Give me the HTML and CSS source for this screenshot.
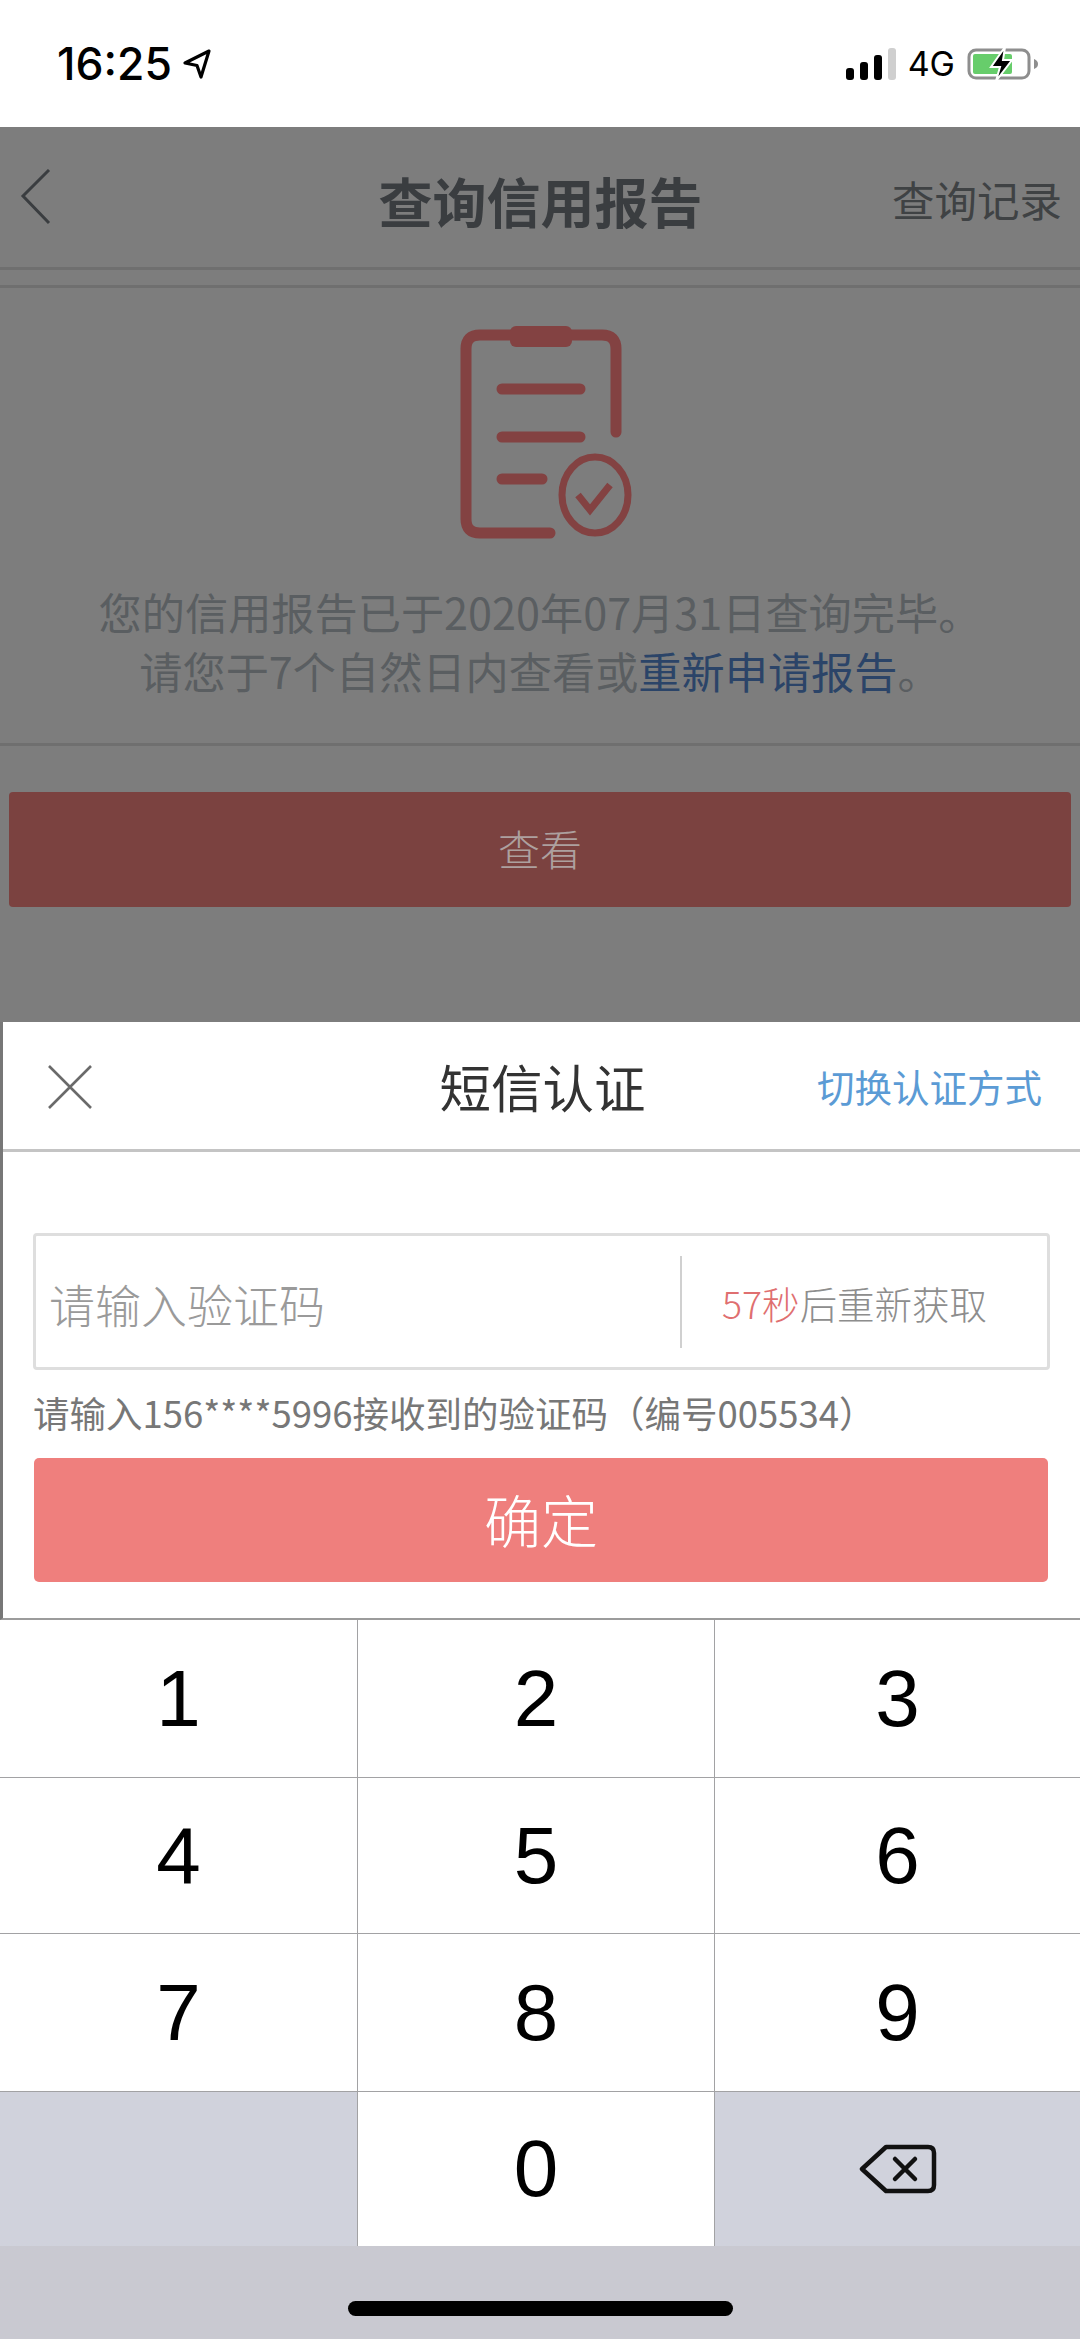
FILE: index.html
```html
<!DOCTYPE html>
<html lang="zh-CN">
<head>
  <meta charset="UTF-8">
  <meta name="viewport" content="width=device-width, initial-scale=1.0">
  <title>查询信用报告</title>
  <link rel="stylesheet" href="styles.css">
</head>
<body>
  <div class="phone">

    <!-- Status bar -->
    <div class="status-bar">
      <div class="status-left">
        <span class="clock">16:25</span>
        <svg class="locate" width="30" height="32" viewBox="0 0 30 32">
          <path d="M27 3 L3 15 L15 17.5 L19 29 Z" fill="none" stroke="#000" stroke-width="3.2" stroke-linejoin="round"/>
        </svg>
      </div>
      <div class="status-right">
        <div class="signal">
          <span class="bar bar1"></span>
          <span class="bar bar2"></span>
          <span class="bar bar3"></span>
          <span class="bar bar4"></span>
        </div>
        <span class="network">4G</span>
        <svg class="battery" width="72" height="34" viewBox="0 0 72 34">
          <rect x="2" y="3" width="60" height="28" rx="7" fill="none" stroke="#8e8e8e" stroke-width="3"/>
          <rect x="6" y="7" width="39" height="20" rx="2" fill="#67cd6b"/>
          <path d="M67 12 C70 13 71 15 71 17 C71 19 70 21 67 22 Z" fill="#8e8e8e"/>
          <path d="M38 0 L24 20 L33 20 L29 34 L45 13 L36 13 Z" fill="#000" stroke="#fff" stroke-width="2"/>
        </svg>
      </div>
    </div>

    <!-- Report page, dimmed behind the sheet -->
    <div class="report-page">
      <div class="nav">
        <svg class="back" width="34" height="56" viewBox="0 0 34 56">
          <path d="M30 1 L4 27 L30 54" fill="none" stroke="#3a3d40" stroke-width="3"/>
        </svg>
        <h1 class="nav-title">查询信用报告</h1>
        <span class="nav-link">查询记录</span>
      </div>

      <div class="report-card">
        <svg class="report-icon" width="180" height="230" viewBox="0 0 180 230">
          <g fill="none" stroke="#834242" stroke-width="11" stroke-linecap="round">
            <path d="M92 207 H22 Q8 207 8 193 V23 Q8 9 22 9 H144 Q158 9 158 23 V106"/>
            <path d="M44 63 H122"/>
            <path d="M44 111 H122"/>
            <path d="M44 153 H84"/>
          </g>
          <rect x="52" y="0" width="62" height="21" rx="6" fill="#834242"/>
          <ellipse cx="137" cy="169" rx="33" ry="38" fill="none" stroke="#834242" stroke-width="7"/>
          <path d="M120 169 L132 184 L152 159" fill="none" stroke="#834242" stroke-width="7"/>
        </svg>
        <p class="report-text">您的信用报告已于2020年07月31日查询完毕。</p>
        <p class="report-text">请您于7个自然日内查看或<span class="report-link">重新申请报告</span>。</p>
      </div>

      <div class="view-btn">查看</div>
    </div>

    <!-- SMS verification sheet -->
    <div class="sheet">
      <div class="sheet-head">
        <svg class="close" width="46" height="46" viewBox="0 0 46 46">
          <path d="M2 2 L44 44 M44 2 L2 44" fill="none" stroke="#6a6a6a" stroke-width="2.6"/>
        </svg>
        <h2 class="sheet-title">短信认证</h2>
        <span class="sheet-switch">切换认证方式</span>
      </div>
      <div class="sheet-body">
        <div class="code-box">
          <span class="code-input">请输入验证码</span>
          <span class="code-timer"><span class="code-secs">57秒</span>后重新获取</span>
        </div>
        <p class="hint">请输入156****5996接收到的验证码（编号005534）</p>
        <div class="confirm-btn">确定</div>
      </div>
    </div>

    <!-- Number pad -->
    <div class="keypad">
      <div class="key">1</div>
      <div class="key">2</div>
      <div class="key">3</div>
      <div class="key">4</div>
      <div class="key">5</div>
      <div class="key">6</div>
      <div class="key">7</div>
      <div class="key">8</div>
      <div class="key">9</div>
      <div class="key key-gray"></div>
      <div class="key">0</div>
      <div class="key key-gray">
        <svg width="78" height="50" viewBox="0 0 78 50">
          <path d="M27 3 H69 Q75 3 75 9 V41 Q75 47 69 47 H27 L3 25 Z" fill="none" stroke="#111" stroke-width="4.5" stroke-linejoin="round"/>
          <path d="M36 15 L56 35 M56 15 L36 35" fill="none" stroke="#111" stroke-width="4.5" stroke-linecap="round"/>
        </svg>
      </div>
    </div>

    <div class="home-area">
      <span class="home-bar"></span>
    </div>
  </div>
</body>
</html>
```

FILE: styles.css
```css
/* Universal Styles */
body {
  margin: 0;
  padding: 0;
  background: #fff;
  font-family: 'Noto Sans CJK SC', 'Noto Sans', sans-serif;
}

h1, h2, p {
  margin: 0;
  font-weight: 400;
}

.phone {
  width: 1080px;
  height: 2339px;
  display: flex;
  flex-direction: column;
  overflow: hidden;
}

/* Status Bar */
.status-bar {
  height: 127px;
  flex: none;
  box-sizing: border-box;
  padding: 0 41px 0 57px;
  display: flex;
  justify-content: space-between;
  align-items: center;
  background: #fff;
  color: #000;
}

.status-left, .status-right {
  display: flex;
  align-items: center;
}

.clock {
  font-family: 'Inter', sans-serif;
  font-size: 44.5px;
  font-weight: 500;
}

.locate {
  margin-left: 10px;
}

.signal {
  display: flex;
  align-items: flex-end;
  gap: 6px;
  height: 32px;
}

.bar {
  width: 8px;
  background: #000;
  border-radius: 3px;
}

.bar1 { height: 12px; }
.bar2 { height: 18px; }
.bar3 { height: 25px; }
.bar4 { height: 32px; background: #cfcfcf; }

.network {
  margin-left: 12px;
  font-family: 'Inter', sans-serif;
  font-size: 34px;
}

.battery {
  margin-left: 12px;
}

/* Dimmed Report Page */
.report-page {
  height: 895px;
  flex: none;
  background: #7d7d7d;
  color: #5a5e61;
}

.nav {
  height: 143px;
  box-sizing: border-box;
  padding: 0 18px 0 19px;
  display: grid;
  grid-template-columns: 1fr auto 1fr;
  align-items: center;
  border-bottom: 3px solid #6f6f6f;
}

.nav-title {
  font-size: 54px;
  font-weight: 700;
  color: #3a3d40;
  margin-top: 7px;
}

.nav-link {
  justify-self: end;
  font-size: 42.5px;
  color: #3f4244;
  margin-top: 2px;
}

.report-card {
  margin-top: 15px;
  height: 461px;
  box-sizing: border-box;
  padding-top: 38px;
  border-top: 3px solid #6f6f6f;
  border-bottom: 3px solid #6f6f6f;
  display: flex;
  flex-direction: column;
  align-items: center;
  text-align: center;
}

.report-icon {
  margin: 0 0 26px 16px;
}

.report-text {
  font-size: 43.2px;
  line-height: 59px;
  font-weight: 400;
}

.report-link {
  color: #2b4468;
}

.view-btn {
  margin: 46px 9px 0 9px;
  height: 115px;
  line-height: 112px;
  background: #7b4240;
  border-radius: 4px;
  color: #ada09f;
  font-size: 42px;
  font-weight: 300;
  text-align: center;
}

/* Verification Sheet */
.sheet {
  height: 598px;
  flex: none;
  box-sizing: border-box;
  background: #fff;
  border-left: 3px solid #777;
  border-bottom: 2px solid #9c9c9c;
}

.sheet-head {
  height: 130px;
  box-sizing: border-box;
  padding: 0 38px 0 44px;
  display: grid;
  grid-template-columns: 1fr auto 1fr;
  align-items: center;
  border-bottom: 3px solid #c4c4c4;
}

.close {
  margin-top: 3px;
}

.sheet-title {
  font-size: 51.5px;
  color: #333;
  transform: translateX(-2px);
}

.sheet-switch {
  justify-self: end;
  font-size: 37.5px;
  color: #5b9bd5;
}

.sheet-body {
  padding: 81px 30px 0 30px;
}

.code-box {
  height: 137px;
  box-sizing: border-box;
  border: 3px solid #dedede;
  border-radius: 4px;
  display: flex;
  align-items: center;
}

.code-input {
  flex: 1;
  margin-top: 3px;
  padding-left: 13px;
  font-size: 46px;
  font-weight: 300;
  color: #9a9a9a;
}

.code-timer {
  width: 367px;
  height: 92px;
  box-sizing: border-box;
  padding-left: 40px;
  line-height: 94px;
  border-left: 2px solid #d0d0d0;
  font-size: 37.5px;
  font-weight: 300;
  color: #8d8d8d;
}

.code-secs {
  color: #df6f70;
}

.hint {
  margin-top: 19px;
  font-size: 36.5px;
  line-height: 48px;
  font-weight: 400;
  color: #777;
  white-space: nowrap;
}

.confirm-btn {
  margin: 21px 2px 0 1px;
  height: 124px;
  line-height: 121px;
  background: #ef7f7d;
  border-radius: 5px;
  color: #fff;
  font-size: 57px;
  font-weight: 300;
  text-align: center;
}

/* Number Pad */
.keypad {
  flex: none;
  display: grid;
  grid-template-columns: 357px 356px 1fr;
  grid-template-rows: 157px 155px 157px 154px;
  gap: 1px;
  background: #a2a2a4;
}

.key {
  display: flex;
  align-items: center;
  justify-content: center;
  background: #fff;
  color: #000;
  font-family: 'Liberation Sans', sans-serif;
  font-size: 80px;
}

.key-gray {
  background: #d0d2dc;
}

.home-area {
  flex: 1;
  display: flex;
  justify-content: center;
  background: #c9c9d1;
}

.home-bar {
  margin-top: 55px;
  width: 385px;
  height: 15px;
  background: #000;
  border-radius: 8px;
}
```
